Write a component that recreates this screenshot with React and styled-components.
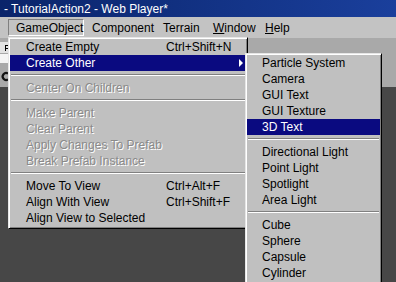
import styled, { createGlobalStyle } from "styled-components"

const GlobalStyle = createGlobalStyle`
  html, body {
    margin: 0;
    padding: 0;
    background: #474747;
  }
  body {
    font-family: "Liberation Sans", Arial, sans-serif;
    font-size: 12px;
  }
`

const mainItems = [
  { label: "Create Empty", shortcut: "Ctrl+Shift+N" },
  { label: "Create Other", active: true, sub: true },
  { sep: true },
  { label: "Center On Children", disabled: true },
  { sep: true },
  { label: "Make Parent", disabled: true },
  { label: "Clear Parent", disabled: true },
  { label: "Apply Changes To Prefab", disabled: true },
  { label: "Break Prefab Instance", disabled: true },
  { sep: true },
  { label: "Move To View", shortcut: "Ctrl+Alt+F" },
  { label: "Align With View", shortcut: "Ctrl+Shift+F" },
  { label: "Align View to Selected" },
]

const subItems = [
  { label: "Particle System" },
  { label: "Camera" },
  { label: "GUI Text" },
  { label: "GUI Texture" },
  { label: "3D Text", active: true },
  { sep: true },
  { label: "Directional Light" },
  { label: "Point Light" },
  { label: "Spotlight" },
  { label: "Area Light" },
  { sep: true },
  { label: "Cube" },
  { label: "Sphere" },
  { label: "Capsule" },
  { label: "Cylinder" },
]

function App() {
  return (
    <Window>
      <GlobalStyle />
      <TitleBar>- TutorialAction2 - Web Player*</TitleBar>
      <MenuBar>
        <MenuTitle $w={76} $pressed>GameObject</MenuTitle>
        <MenuTitle $w={71}>Component</MenuTitle>
        <MenuTitle $w={50}>Terrain</MenuTitle>
        <MenuTitle $w={52}><u>W</u>indow</MenuTitle>
        <MenuTitle $w={40}><u>H</u>elp</MenuTitle>
      </MenuBar>
      <Toolbar>
        <svg width="9" height="49" viewBox="0 0 9 49">
          <rect x="0" y="4" width="9" height="11" fill="#e2e2e2" />
          <path d="M5 7h3v1h-2v2h2v1h-2v2h-1z" fill="#000" />
          <rect x="0" y="16" width="9" height="9" fill="#f4f4f4" />
          <path d="M8 35.5a3.5 3.5 0 1 0 0 6" stroke="#111" strokeWidth="2.2" fill="none" />
        </svg>
      </Toolbar>
      <Scene />

      <Dropdown>
        {mainItems.map((it, i) =>
          it.sep ? (
            <Separator key={i} />
          ) : (
            <Item key={i} $active={it.active} $disabled={it.disabled} $indent={16}>
              <Label $w={140}>{it.label}</Label>
              <Shortcut>{it.shortcut}</Shortcut>
              {it.sub && <Arrow />}
            </Item>
          )
        )}
      </Dropdown>

      <SubMenu>
        {subItems.map((it, i) =>
          it.sep ? (
            <Separator key={i} />
          ) : (
            <Item key={i} $active={it.active} $indent={15}>
              <Label>{it.label}</Label>
            </Item>
          )
        )}
      </SubMenu>
    </Window>
  )
}

const Window = styled.div`
  position: relative;
  width: 396px;
  height: 282px;
  overflow: hidden;
  display: flex;
  flex-direction: column;
  background: #474747;
`

const TitleBar = styled.div`
  flex: none;
  height: 17px;
  display: flex;
  align-items: center;
  padding-left: 4px;
  background: linear-gradient(to right, #0a246a 0%, #1a3f9c 100%);
  color: #ffffff;
  font-size: 12px;
  white-space: pre;
`

const MenuBar = styled.div`
  flex: none;
  height: 21px;
  display: flex;
  align-items: center;
  padding-left: 8px;
  background: #c3c3c3;
  color: #000;
`

const MenuTitle = styled.div`
  box-sizing: border-box;
  width: ${(p) => p.$w}px;
  height: 17px;
  padding-left: 7px;
  display: flex;
  align-items: center;
  border: 1px solid;
  border-color: ${(p) => (p.$pressed ? "#808080 #ffffff #ffffff #808080" : "transparent")};
  white-space: nowrap;

  u {
    text-decoration: underline;
  }
`

const Toolbar = styled.div`
  flex: none;
  height: 49px;
  display: flex;
  background: #a9a9a9;
`

const Scene = styled.div`
  flex: 1;
  background: #474747;
`

const Dropdown = styled.div`
  position: absolute;
  left: 8px;
  top: 37px;
  width: 240px;
  box-sizing: border-box;
  padding: 1px 1px 2px;
  display: flex;
  flex-direction: column;
  background: #c0c0c0;
  border: 1px solid;
  border-color: #e6e6e6 #000000 #000000 #e6e6e6;
  box-shadow: inset 1px 1px 0 #ffffff, inset -1px -1px 0 #808080;
  z-index: 1;
`

const SubMenu = styled(Dropdown)`
  left: 245px;
  top: 53px;
  width: 137px;
  z-index: 2;
`

const Item = styled.div`
  height: 16px;
  display: flex;
  align-items: center;
  padding-left: ${(p) => p.$indent}px;
  background: ${(p) => (p.$active ? "#0a0a80" : "transparent")};
  color: ${(p) => (p.$active ? "#ffffff" : p.$disabled ? "#8a8a8a" : "#000000")};
  text-shadow: ${(p) => (p.$disabled ? "1px 1px 0 #ffffff" : "none")};
  white-space: nowrap;
`

const Label = styled.span`
  flex: none;
  width: ${(p) => (p.$w ? `${p.$w}px` : "auto")};
`

const Shortcut = styled.span`
  flex: 1;
`

const Arrow = styled.span`
  width: 0;
  height: 0;
  margin-right: 3px;
  border-top: 4px solid transparent;
  border-bottom: 4px solid transparent;
  border-left: 4px solid #ffffff;
`

const Separator = styled.div`
  height: 0;
  margin: 3px 1px 4px;
  border-top: 1px solid #808080;
  border-bottom: 1px solid #ffffff;
`

export default App
